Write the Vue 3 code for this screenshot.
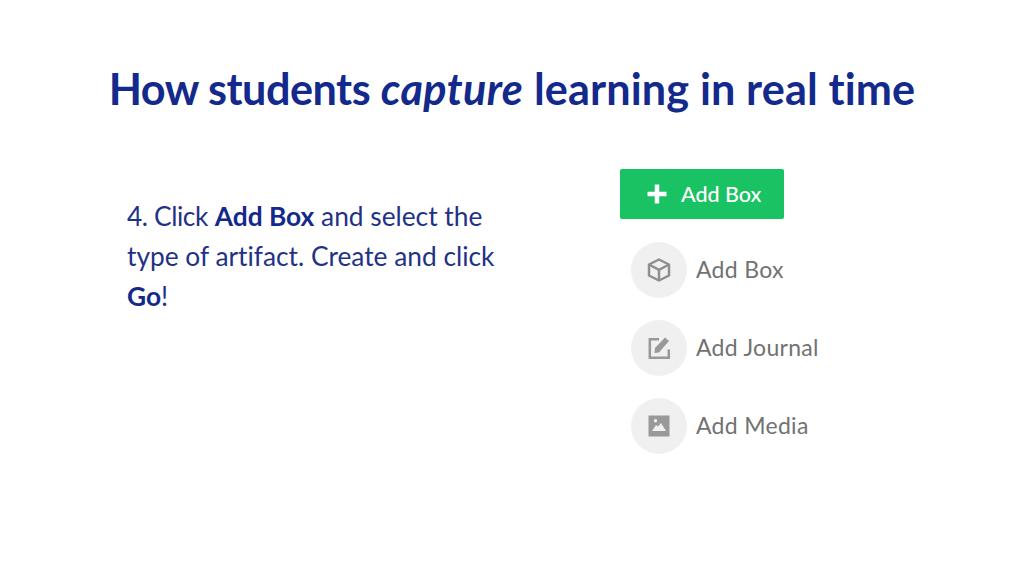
<script setup>
// Slide: how students capture learning, step 4.
const options = [
  { label: 'Add Box', icon: 'box' },
  { label: 'Add Journal', icon: 'journal' },
  { label: 'Add Media', icon: 'media' },
];
</script>

<template>
  <div class="slide">
    <h1 class="title"><span class="tight">How students</span> <em>capture</em> learning in real time</h1>
    <div class="body">
      <p class="step"><span class="tight">4. Click</span> <b>Add Box</b> and select the type of artifact. Create and click <b>Go</b>!</p>
      <div class="menu">
        <div class="add-btn">
          <svg class="plus" viewBox="0 0 20 20" width="20" height="20">
            <path d="M10 0.500v19M0.500 10h19" stroke="#fff" stroke-width="4.500" fill="none" />
          </svg>
          <span>Add Box</span>
        </div>
        <div v-for="o in options" :key="o.label" class="option">
          <span class="circle">
            <svg v-if="o.icon === 'box'" viewBox="0 0 24 24" width="24" height="24" fill="none" stroke="#8f8f8f" stroke-width="2.500" stroke-linejoin="round">
              <path d="M12 1.500l10 5v11l-10 5-10-5v-11z" />
              <path d="M2 6.500l10 5.300 10-5.300M12 11.800v10.700" />
            </svg>
            <svg v-else-if="o.icon === 'journal'" viewBox="0 0 24 24" width="24" height="24" fill="none">
              <path d="M12 3.200H2.800v18.600h19V13.500" stroke="#999" stroke-width="2.500" />
              <path d="M7.500 17l0.500-5L18 1.500l4 3.500-10 11.500z" fill="#999" />
            </svg>
            <svg v-else viewBox="0 0 24 24" width="24" height="24">
              <path fill-rule="evenodd" fill="#999" d="M1.500 1.500h21v21h-21zM5 17h14l-5-8-3 3.500-2-1.500zM8.500 5a1.700 1.700 0 1 0 0 3.400 1.700 1.700 0 0 0 0-3.400z" />
            </svg>
          </span>
          <span class="option-label">{{ o.label }}</span>
        </div>
      </div>
    </div>
  </div>
</template>

<style>
html, body { margin: 0; background: #fff; }
</style>

<style scoped>
.slide {
  width: 1024px;
  height: 576px;
  box-sizing: border-box;
  padding-top: 64px;
  overflow: hidden;
  background: #fff;
  font-family: Lato, "Open Sans", sans-serif;
  font-variant-ligatures: none;
  color: #1a2f8a;
}
.title {
  margin: 0;
  text-align: center;
  font-size: 43.200px;
  line-height: 48px;
  font-weight: 700;
  letter-spacing: 0.13px;
  color: #14298c;
  white-space: nowrap;
}
.title .tight { letter-spacing: -0.5px; }
.title em { letter-spacing: 0.4px; }
.body {
  display: grid;
  grid-template-columns: 510px 1fr;
  margin-top: 57px;
}
.step {
  margin: 27px 0 0;
  padding-left: 127px;
  font-size: 26.300px;
  line-height: 40px;
  color: #1f3286;
}
.step .tight { letter-spacing: -0.4px; }
.step b { color: #14298c; }
.menu {
  display: flex;
  flex-direction: column;
  align-items: flex-start;
}
.add-btn {
  display: flex;
  align-items: center;
  gap: 14px;
  width: 164px;
  height: 50px;
  box-sizing: border-box;
  padding-left: 27px;
  border-radius: 2px;
  background: #19c262;
  color: #fff;
  font-size: 21.500px;
  font-weight: 500;
  margin-left: 110px;
}
.plus { flex: none; }
.option {
  display: flex;
  align-items: center;
  gap: 9px;
  margin: 24px 0 0 121px;
  height: 54px;
}
.circle {
  display: flex;
  align-items: center;
  justify-content: center;
  width: 56px;
  height: 56px;
  border-radius: 50%;
  background: #f0f0f0;
}
.option-label {
  color: #727272;
  font-size: 23px;
  letter-spacing: 0.3px;
  margin-top: -2px;
}
</style>
